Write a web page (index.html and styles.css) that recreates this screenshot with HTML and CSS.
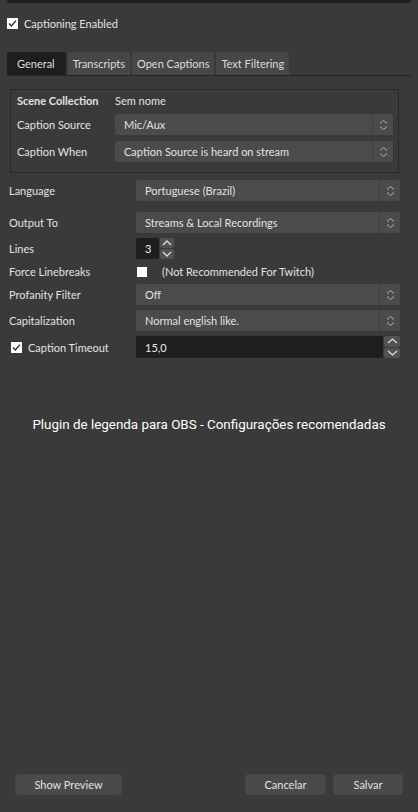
FILE: index.html
```html
<!DOCTYPE html>
<html lang="pt-BR">
<head>
<meta charset="utf-8">
<title>Closed Captions</title>
<link rel="stylesheet" href="styles.css">
</head>
<body>
<div class="top-bar"></div>

<div class="check-row enable">
  <span class="checkbox"><svg width="9" height="9" viewBox="0 0 9 9"><path d="M1 4.6 L3.4 7 L8 1.6" fill="none" stroke="#2d2d2d" stroke-width="1.4"/></svg></span>
  <span>Captioning Enabled</span>
</div>

<div class="tabs">
  <div class="tab active">General</div>
  <div class="tab">Transcripts</div>
  <div class="tab">Open Captions</div>
  <div class="tab">Text Filtering</div>
</div>

<div class="panel">
  <div class="group">
    <div class="group-row head">
      <span class="bold">Scene Collection</span>
      <span>Sem nome</span>
    </div>
    <div class="group-row">
      <span>Caption Source</span>
      <div class="combo"><span class="combo-text">Mic/Aux</span><span class="combo-arrow"><svg width="9" height="12" viewBox="0 0 9 12"><path d="M1 4.5 L4.5 1.5 L8 4.5 M1 7.5 L4.5 10.5 L8 7.5" fill="none" stroke="#b4b4b4" stroke-width="1"/></svg></span></div>
    </div>
    <div class="group-row">
      <span>Caption When</span>
      <div class="combo"><span class="combo-text">Caption Source is heard on stream</span><span class="combo-arrow"><svg width="9" height="12" viewBox="0 0 9 12"><path d="M1 4.5 L4.5 1.5 L8 4.5 M1 7.5 L4.5 10.5 L8 7.5" fill="none" stroke="#b4b4b4" stroke-width="1"/></svg></span></div>
    </div>
  </div>

  <div class="form">
    <div class="form-row spaced">
      <span>Language</span>
      <div class="combo"><span class="combo-text">Portuguese (Brazil)</span><span class="combo-arrow"><svg width="9" height="12" viewBox="0 0 9 12"><path d="M1 4.5 L4.5 1.5 L8 4.5 M1 7.5 L4.5 10.5 L8 7.5" fill="none" stroke="#b4b4b4" stroke-width="1"/></svg></span></div>
    </div>
    <div class="form-row">
      <span>Output To</span>
      <div class="combo"><span class="combo-text">Streams &amp; Local Recordings</span><span class="combo-arrow"><svg width="9" height="12" viewBox="0 0 9 12"><path d="M1 4.5 L4.5 1.5 L8 4.5 M1 7.5 L4.5 10.5 L8 7.5" fill="none" stroke="#b4b4b4" stroke-width="1"/></svg></span></div>
    </div>
    <div class="form-row">
      <span>Lines</span>
      <div class="spin">
        <span class="spin-field small">3</span>
        <span class="spin-btns">
          <span class="spin-btn"><svg width="10" height="6" viewBox="0 0 10 6"><path d="M1 5 L5 1 L9 5" fill="none" stroke="#dcdcdc" stroke-width="1.3"/></svg></span>
          <span class="spin-btn"><svg width="10" height="6" viewBox="0 0 10 6"><path d="M1 1 L5 5 L9 1" fill="none" stroke="#dcdcdc" stroke-width="1.3"/></svg></span>
        </span>
      </div>
    </div>
    <div class="form-row short">
      <span>Force Linebreaks</span>
      <div class="check-row force">
        <span class="checkbox small"></span>
        <span>(Not Recommended For Twitch)</span>
      </div>
    </div>
    <div class="form-row">
      <span>Profanity Filter</span>
      <div class="combo"><span class="combo-text">Off</span><span class="combo-arrow"><svg width="9" height="12" viewBox="0 0 9 12"><path d="M1 4.5 L4.5 1.5 L8 4.5 M1 7.5 L4.5 10.5 L8 7.5" fill="none" stroke="#b4b4b4" stroke-width="1"/></svg></span></div>
    </div>
    <div class="form-row">
      <span>Capitalization</span>
      <div class="combo"><span class="combo-text">Normal english like.</span><span class="combo-arrow"><svg width="9" height="12" viewBox="0 0 9 12"><path d="M1 4.5 L4.5 1.5 L8 4.5 M1 7.5 L4.5 10.5 L8 7.5" fill="none" stroke="#b4b4b4" stroke-width="1"/></svg></span></div>
    </div>
    <div class="form-row tall">
      <div class="check-row timeout">
        <span class="checkbox"><svg width="9" height="9" viewBox="0 0 9 9"><path d="M1 4.6 L3.4 7 L8 1.6" fill="none" stroke="#2d2d2d" stroke-width="1.4"/></svg></span>
        <span>Caption Timeout</span>
      </div>
      <div class="spin">
        <span class="spin-field wide">15,0</span>
        <span class="spin-btns narrow">
          <span class="spin-btn"><svg width="11" height="6" viewBox="0 0 11 6"><path d="M1 5 L5.5 1 L10 5" fill="none" stroke="#dcdcdc" stroke-width="1.3"/></svg></span>
          <span class="spin-btn"><svg width="11" height="6" viewBox="0 0 11 6"><path d="M1 1 L5.5 5 L10 1" fill="none" stroke="#dcdcdc" stroke-width="1.3"/></svg></span>
        </span>
      </div>
    </div>
  </div>
</div>

<p class="note">Plugin de legenda para OBS - Configurações recomendadas</p>

<div class="footer">
  <button class="btn preview">Show Preview</button>
  <button class="btn cancel">Cancelar</button>
  <button class="btn save">Salvar</button>
</div>
</body>
</html>
```

FILE: styles.css
```css
* { box-sizing: border-box; }

html, body { margin: 0; padding: 0; }

body {
  width: 418px;
  height: 812px;
  overflow: hidden;
  background: #3a3a3a;
  color: #e2e2e2;
  font-family: Lato, "Liberation Sans", sans-serif;
  font-size: 11px;
  display: flex;
  flex-direction: column;
}

.top-bar {
  height: 3px;
  margin: 0 7px;
  background: #1e1e1e;
  border-radius: 0 0 3px 3px;
}

.check-row {
  display: flex;
  align-items: center;
  gap: 6px;
}

.enable {
  height: 14px;
  margin: 13px 0 0 7px;
}

.checkbox {
  flex: none;
  width: 11px;
  height: 11px;
  background: #ffffff;
  display: flex;
  align-items: center;
  justify-content: center;
}

.checkbox.small {
  width: 10px;
  height: 10px;
}

.tabs {
  display: flex;
  gap: 2px;
  margin: 22px 7px 0;
  border-bottom: 1px solid #262626;
}

.tab {
  height: 23px;
  line-height: 23px;
  padding: 0 5px;
  background: #474747;
  border-radius: 3px 3px 0 0;
  color: #dcdcdc;
}

.tab.active {
  background: #1e1e1e;
  padding: 0 11px 0 10px;
}

.panel {
  padding-top: 13px;
}

.group {
  width: 389px;
  margin-left: 10px;
  border: 1px solid #282828;
  padding: 2px 5px 10px 6px;
  display: flex;
  flex-direction: column;
  gap: 6px;
}

.group-row {
  display: grid;
  grid-template-columns: 98px 1fr;
  align-items: center;
}

.group-row.head {
  height: 16px;
}

.bold {
  font-weight: bold;
}

.combo {
  height: 21px;
  background: #4b4b4b;
  border-radius: 2px;
  display: flex;
  align-items: center;
}

.combo-text {
  flex: 1;
  padding-left: 9px;
  white-space: nowrap;
  overflow: hidden;
}

.combo-arrow {
  flex: none;
  width: 21px;
  height: 100%;
  border-left: 1px solid #3e3e3e;
  display: flex;
  align-items: center;
  justify-content: center;
}

.form {
  display: flex;
  flex-direction: column;
  gap: 5px;
  padding: 7px 18px 0 9px;
}

.form-row {
  display: grid;
  grid-template-columns: 127px 1fr;
  align-items: center;
  height: 21px;
}

.form-row.spaced { margin-bottom: 6px; }
.form-row.short { height: 15px; }
.form-row.tall { height: 22px; }

.spin {
  display: flex;
  gap: 1px;
  height: 100%;
}

.spin-field {
  height: 100%;
  background: #1e1e1e;
  border-radius: 2px;
  padding-left: 9px;
  display: flex;
  align-items: center;
  color: #ececec;
}

.spin-field.small { width: 23px; }
.spin-field.wide { flex: 1; }

.spin-btns {
  width: 14px;
  display: flex;
  flex-direction: column;
  gap: 1px;
}

.spin-btns.narrow { width: 16px; }

.spin-btn {
  flex: 1;
  background: #525252;
  border-radius: 2px;
  display: flex;
  align-items: center;
  justify-content: center;
}

.force {
  margin-left: 1px;
  gap: 15px;
}

.timeout {
  padding-left: 2px;
}

.note {
  margin: 59px 0 0;
  text-align: center;
  font-family: Roboto, "Liberation Sans", sans-serif;
  font-size: 13.4px;
  line-height: 16px;
  color: #ffffff;
}

.footer {
  margin-top: auto;
  display: flex;
  gap: 7px;
  padding: 0 15px 17px;
}

.btn {
  height: 21px;
  border: 1px solid #454545;
  background: #4a4a4a;
  border-radius: 3px;
  color: #e2e2e2;
  font: inherit;
  padding: 0;
}

.btn.preview { width: 107px; margin-right: auto; }
.btn.cancel { width: 81px; }
.btn.save { width: 70px; }
```
